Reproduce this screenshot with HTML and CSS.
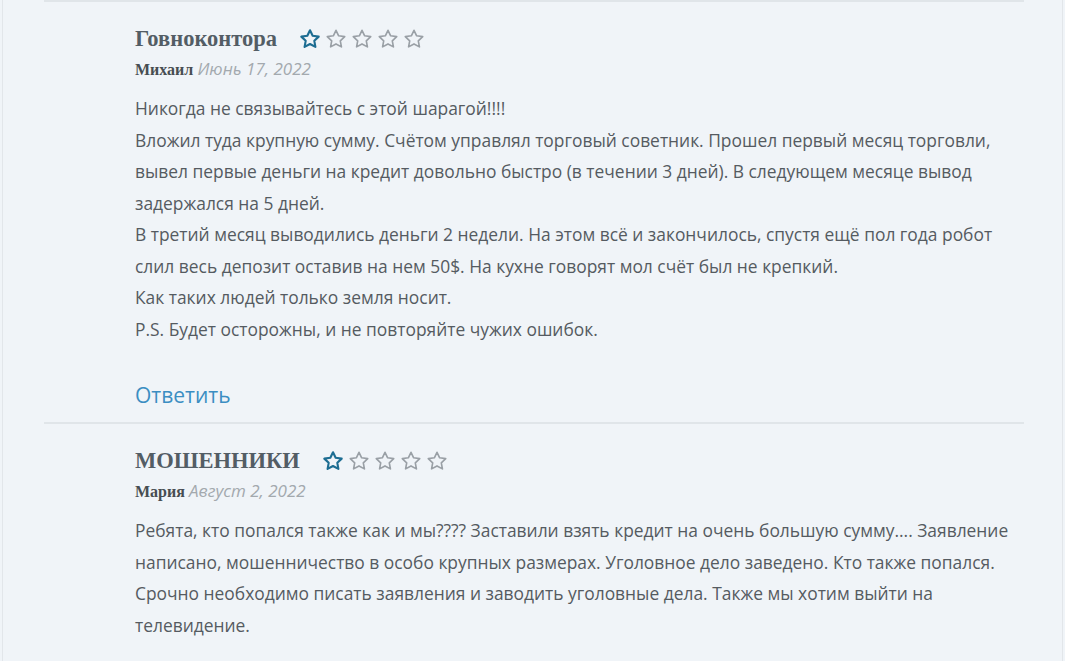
FILE: index.html
```html
<!DOCTYPE html>
<html lang="ru">
<head>
    <meta charset="UTF-8">
    <meta name="viewport" content="width=device-width, initial-scale=1.0">
    <title>Отзывы</title>
    <link rel="stylesheet" href="styles.css">
</head>
<body>

<div class="page">
    <ol class="comment-list">
        <li class="comment">
            <div class="comment-head">
                <h3 class="comment-title">Говноконтора</h3>
                <div class="rating">
                    <svg class="star on" viewBox="0 0 24 24"><path d="M12 2.5l2.9 6 6.6.9-4.8 4.6 1.2 6.6L12 17.4l-5.9 3.2 1.2-6.6-4.8-4.6 6.6-.9z"/></svg>
                    <svg class="star" viewBox="0 0 24 24"><path d="M12 2.5l2.9 6 6.6.9-4.8 4.6 1.2 6.6L12 17.4l-5.9 3.2 1.2-6.6-4.8-4.6 6.6-.9z"/></svg>
                    <svg class="star" viewBox="0 0 24 24"><path d="M12 2.5l2.9 6 6.6.9-4.8 4.6 1.2 6.6L12 17.4l-5.9 3.2 1.2-6.6-4.8-4.6 6.6-.9z"/></svg>
                    <svg class="star" viewBox="0 0 24 24"><path d="M12 2.5l2.9 6 6.6.9-4.8 4.6 1.2 6.6L12 17.4l-5.9 3.2 1.2-6.6-4.8-4.6 6.6-.9z"/></svg>
                    <svg class="star" viewBox="0 0 24 24"><path d="M12 2.5l2.9 6 6.6.9-4.8 4.6 1.2 6.6L12 17.4l-5.9 3.2 1.2-6.6-4.8-4.6 6.6-.9z"/></svg>
                </div>
            </div>
            <div class="comment-meta">
                <span class="author">Михаил</span>
                <span class="date">Июнь 17, 2022</span>
            </div>
            <p class="comment-text">
                Никогда не связывайтесь с этой шарагой!!!!<br>
                Вложил туда крупную сумму. Счётом управлял торговый советник. Прошел первый месяц торговли, вывел первые деньги на кредит довольно быстро (в течении 3 дней). В следующем месяце вывод задержался на 5 дней.<br>
                В третий месяц выводились деньги 2 недели. На этом всё и закончилось, спустя ещё пол года робот слил весь депозит оставив на нем 50$. На кухне говорят мол счёт был не крепкий.<br>
                Как таких людей только земля носит.<br>
                P.S. Будет осторожны, и не повторяйте чужих ошибок.
            </p>
            <a class="reply" href="#">Ответить</a>
        </li>
        <li class="comment">
            <div class="comment-head">
                <h3 class="comment-title">МОШЕННИКИ</h3>
                <div class="rating">
                    <svg class="star on" viewBox="0 0 24 24"><path d="M12 2.5l2.9 6 6.6.9-4.8 4.6 1.2 6.6L12 17.4l-5.9 3.2 1.2-6.6-4.8-4.6 6.6-.9z"/></svg>
                    <svg class="star" viewBox="0 0 24 24"><path d="M12 2.5l2.9 6 6.6.9-4.8 4.6 1.2 6.6L12 17.4l-5.9 3.2 1.2-6.6-4.8-4.6 6.6-.9z"/></svg>
                    <svg class="star" viewBox="0 0 24 24"><path d="M12 2.5l2.9 6 6.6.9-4.8 4.6 1.2 6.6L12 17.4l-5.9 3.2 1.2-6.6-4.8-4.6 6.6-.9z"/></svg>
                    <svg class="star" viewBox="0 0 24 24"><path d="M12 2.5l2.9 6 6.6.9-4.8 4.6 1.2 6.6L12 17.4l-5.9 3.2 1.2-6.6-4.8-4.6 6.6-.9z"/></svg>
                    <svg class="star" viewBox="0 0 24 24"><path d="M12 2.5l2.9 6 6.6.9-4.8 4.6 1.2 6.6L12 17.4l-5.9 3.2 1.2-6.6-4.8-4.6 6.6-.9z"/></svg>
                </div>
            </div>
            <div class="comment-meta">
                <span class="author">Мария</span>
                <span class="date">Август 2, 2022</span>
            </div>
            <p class="comment-text">
                Ребята, кто попался также как и мы???? Заставили взять кредит на очень большую сумму.... Заявление написано, мошенничество в особо крупных размерах. Уголовное дело заведено. Кто также попался. Срочно необходимо писать заявления и заводить уголовные дела. Также мы хотим выйти на телевидение.
            </p>
        </li>
    </ol>
</div>

</body>
</html>
```

FILE: styles.css
```css
body {
    margin: 0;
    background: #f0f4f8;
    font-family: "Open Sans", Arial, sans-serif;
    color: #555b61;
}
.page {
    margin: 0 2px;
    border-left: 1px solid #e2e6ea;
    border-right: 1px solid #e2e6ea;
    min-height: 661px;
    overflow: hidden;
}
.comment-list {
    list-style: none;
    margin: 0;
    padding: 0 38px 0 41px;
}
.comment {
    border-top: 2px solid #e0e5e9;
    padding: 18px 0 12px 91px;
}
.comment-head {
    display: flex;
    align-items: center;
    height: 38px;
}
.comment-title {
    margin: 0 22px 0 0;
    font-family: "Liberation Serif", "Times New Roman", serif;
    font-size: 22.5px;
    font-weight: bold;
    color: #535d65;
}
.rating {
    display: flex;
    gap: 4px;
}
.star {
    width: 22px;
    height: 22px;
    fill: none;
    stroke: #9aa0a6;
    stroke-width: 1.8;
    stroke-linejoin: round;
}
.star.on {
    stroke: #1d6d92;
    stroke-width: 2.3;
}
.comment-meta {
    height: 22px;
    line-height: 22px;
}
.author {
    font-family: "Liberation Serif", "Times New Roman", serif;
    font-weight: bold;
    font-size: 16px;
    color: #474d52;
}
.date {
    font-style: italic;
    font-size: 17px;
    color: #a3a9ae;
}
.comment-text {
    margin: 13px 0 0;
    font-size: 17.4px;
    line-height: 31.5px;
}
.reply {
    display: inline-block;
    margin-top: 35px;
    font-size: 21px;
    line-height: 30px;
    color: #3b8ec2;
    text-decoration: none;
}
```
